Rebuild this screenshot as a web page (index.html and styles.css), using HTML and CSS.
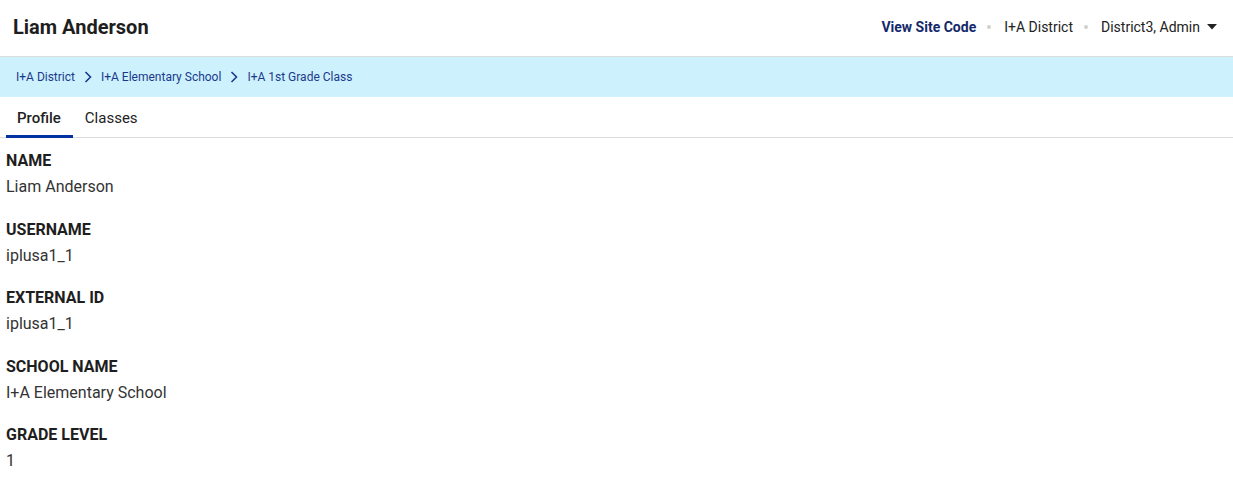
FILE: index.html
```html
<!DOCTYPE html>
<html lang="en">
<head>
    <meta charset="UTF-8">
    <meta name="viewport" content="width=device-width, initial-scale=1.0">
    <title>Liam Anderson</title>
    <link rel="stylesheet" href="styles.css">
</head>
<body>
    <header class="top-bar">
        <h1 class="page-title">Liam Anderson</h1>
        <nav class="top-links">
            <a class="site-code" href="#">View Site Code</a>
            <span class="dot"></span>
            <span class="top-item">I+A District</span>
            <span class="dot"></span>
            <span class="top-item user-menu">District3, Admin
                <svg class="caret" width="10" height="6" viewBox="0 0 10 6"><path d="M0 0h10L5 5.5z" fill="#222"/></svg>
            </span>
        </nav>
    </header>

    <div class="crumbs">
        <a href="#">I+A District</a>
        <svg class="chev" width="8" height="12" viewBox="0 0 8 12"><path d="M1.5 1l5 5-5 5" fill="none" stroke="#1b3a8c" stroke-width="1.6"/></svg>
        <a href="#">I+A Elementary School</a>
        <svg class="chev" width="8" height="12" viewBox="0 0 8 12"><path d="M1.5 1l5 5-5 5" fill="none" stroke="#1b3a8c" stroke-width="1.6"/></svg>
        <a href="#">I+A 1st Grade Class</a>
    </div>

    <div class="tabs">
        <div class="tab active">Profile</div>
        <div class="tab">Classes</div>
    </div>

    <div class="profile">
        <div class="field">
            <div class="field-label">NAME</div>
            <div class="field-value">Liam Anderson</div>
        </div>
        <div class="field">
            <div class="field-label">USERNAME</div>
            <div class="field-value">iplusa1_1</div>
        </div>
        <div class="field">
            <div class="field-label">EXTERNAL ID</div>
            <div class="field-value">iplusa1_1</div>
        </div>
        <div class="field">
            <div class="field-label">SCHOOL NAME</div>
            <div class="field-value">I+A Elementary School</div>
        </div>
        <div class="field">
            <div class="field-label">GRADE LEVEL</div>
            <div class="field-value">1</div>
        </div>
    </div>
</body>
</html>
```

FILE: styles.css
```css
body {
    margin: 0;
    font-family: Roboto, "Liberation Sans", sans-serif;
    color: #222;
    background: #fff;
}
a {
    text-decoration: none;
    color: inherit;
}
.top-bar {
    height: 54px;
    display: flex;
    align-items: center;
    justify-content: space-between;
    padding: 0 16px 2px 13px;
    border-bottom: 1px solid #dcdcdc;
}
.page-title {
    margin: 0;
    font-size: 20px;
    font-weight: 700;
    color: #1e1e1e;
}
.top-links {
    display: flex;
    align-items: center;
    font-size: 14px;
    color: #222;
}
.site-code {
    font-weight: 700;
    color: #13296b;
}
.dot {
    width: 4px;
    height: 4px;
    border-radius: 50%;
    background: #d0d0d0;
    margin: 0 13px 0 11px;
}
.user-menu {
    display: flex;
    align-items: center;
}
.caret {
    margin-left: 7px;
}
.crumbs {
    height: 40px;
    background: #cdf1fd;
    display: flex;
    align-items: center;
    padding-left: 16px;
    font-size: 12px;
    color: #1b3a8c;
}
.chev {
    margin: 0 9px 0 9px;
}
.tabs {
    display: flex;
    padding-left: 6px;
    border-bottom: 1px solid #dcdcdc;
}
.tab {
    font-size: 15px;
    font-weight: 500;
    color: #222;
    padding: 12px 12px 8px 11px;
    border-bottom: 3px solid transparent;
    margin-bottom: -1px;
}
.tab + .tab {
    font-weight: 400;
    padding-left: 12px;
}
.tab.active {
    border-bottom-color: #0033a1;
}
.profile {
    padding: 13px 6px 0;
}
.field {
    margin-bottom: 22.5px;
}
.field-label {
    font-size: 16px;
    font-weight: 700;
    color: #1e1e1e;
    line-height: 20px;
}
.field-value {
    font-size: 16px;
    color: #333;
    line-height: 20px;
    margin-top: 6px;
}
```
